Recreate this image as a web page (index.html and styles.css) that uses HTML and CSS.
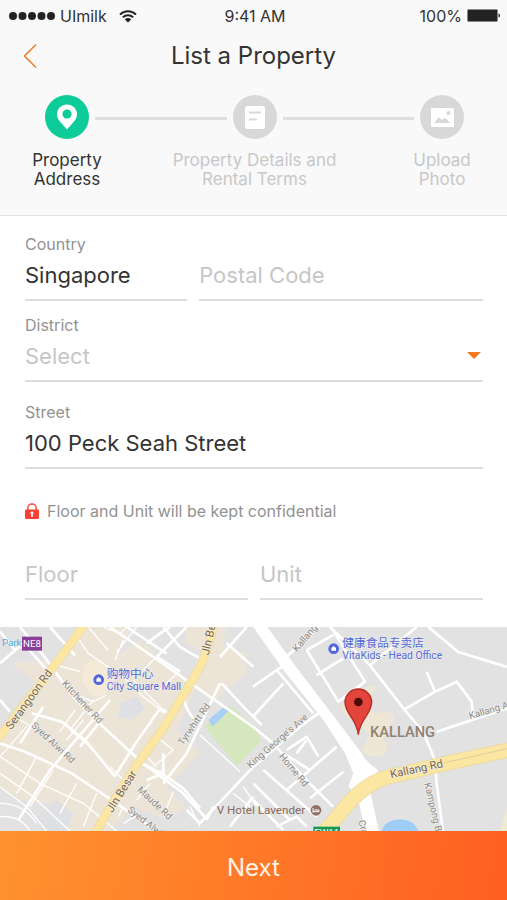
FILE: index.html
```
<!DOCTYPE html>
<html lang="en">
<head>
  <meta charset="utf-8">
  <meta name="viewport" content="width=device-width, initial-scale=1">
  <title>List a Property</title>
  <link rel="stylesheet" href="styles.css">
</head>
<body>
  <header class="header">
    <div class="status-bar">
      <div class="carrier">
        <svg class="signal" viewBox="0 0 46 8" width="46" height="8">
          <circle cx="4" cy="4" r="4"/>
          <circle cx="13.5" cy="4" r="4"/>
          <circle cx="23" cy="4" r="4"/>
          <circle cx="32.5" cy="4" r="4"/>
          <circle cx="42" cy="4" r="4"/>
        </svg>
        <span>UImilk</span>
        <svg class="wifi" viewBox="0 0 18 13" width="18" height="13">
          <path d="M1 4.6a11.5 11.5 0 0 1 16 0M3.8 7.4a7.5 7.5 0 0 1 10.4 0" fill="none" stroke="#222" stroke-width="2"/>
          <path d="M5.8 9.4a4.6 4.6 0 0 1 6.4 0L9 12.6z"/>
        </svg>
      </div>
      <span class="time">9:41 AM</span>
      <div class="battery">
        <span>100%</span>
        <svg viewBox="0 0 34 14" width="34" height="14">
          <rect x="0.5" y="0.5" width="30" height="12" rx="1" fill="#222" stroke="#888"/>
          <path d="M31.5 4.5c2 .3 2 3.7 0 4z"/>
        </svg>
      </div>
    </div>

    <div class="nav">
      <button class="back" type="button" aria-label="Back">
        <svg viewBox="0 0 14 26" width="14" height="26">
          <path d="M13 1.5L1.5 13L13 24.5" fill="none" stroke="#f07d2e" stroke-width="1.6"/>
        </svg>
      </button>
      <h1>List a Property</h1>
    </div>

    <ol class="steps">
      <li class="step active">
        <svg viewBox="0 0 44 44" width="44" height="44">
          <circle cx="22" cy="22" r="22" fill="#0ecb9a"/>
          <path d="M22 9.500c-5.600 0-10 4.300-10 9.700 0 6 5.600 9.800 10 15.300 4.400-5.500 10-9.300 10-15.300 0-5.400-4.400-9.700-10-9.700z" fill="#fff"/>
          <circle cx="22" cy="19" r="4.600" fill="#0ecb9a"/>
        </svg>
        <span>Property<br>Address</span>
      </li>
      <li class="line"></li>
      <li class="step">
        <svg viewBox="0 0 44 44" width="44" height="44">
          <circle cx="22" cy="22" r="22" fill="#d8d8d8"/>
          <rect x="12" y="11" width="20" height="23" rx="2.500" fill="#fff"/>
          <path d="M16 17.500h12M16 24.500h8" stroke="#d8d8d8" stroke-width="2"/>
        </svg>
        <span>Property Details and<br>Rental Terms</span>
      </li>
      <li class="line"></li>
      <li class="step">
        <svg viewBox="0 0 44 44" width="44" height="44">
          <circle cx="22" cy="22" r="22" fill="#d8d8d8"/>
          <rect x="11" y="13" width="23" height="19" rx="1" fill="#fff"/>
          <path d="M14 28l4.500-6 3.500 3 3-2.200 5.500 5.200z" fill="#d8d8d8"/>
          <circle cx="28.500" cy="18" r="2" fill="#d8d8d8"/>
        </svg>
        <span>Upload<br>Photo</span>
      </li>
    </ol>
  </header>

  <form class="form" id="propertyForm">
    <div class="row country-row">
      <div class="field">
        <label for="country">Country</label>
        <input id="country" type="text" value="Singapore">
      </div>
      <div class="field">
        <input id="postal" type="text" placeholder="Postal Code" aria-label="Postal Code">
      </div>
    </div>

    <div class="field">
      <label for="district">District</label>
      <div class="select-wrap">
        <select id="district">
          <option value="">Select</option>
        </select>
        <svg class="arrow" viewBox="0 0 14 7" width="14" height="7"><path d="M0 0h14L7 7z" fill="#f47a20"/></svg>
      </div>
    </div>

    <div class="field street">
      <label for="street">Street</label>
      <input id="street" type="text" value="100 Peck Seah Street">
    </div>

    <p class="notice">
      <svg viewBox="0 0 14 16" width="14" height="16">
        <path d="M2.800 7V5.200a4.200 4.200 0 0 1 8.400 0V7" fill="none" stroke="#fb4a3e" stroke-width="1.500"/>
        <rect y="6.500" width="14" height="9.500" rx="1" fill="#fb3f35"/>
        <path d="M7 8.500a1.500 1.500 0 0 1 .8 2.800V14H6.200v-2.700A1.500 1.500 0 0 1 7 8.500z" fill="#fff"/>
      </svg>
      Floor and Unit will be kept confidential
    </p>

    <div class="row unit-row">
      <div class="field">
        <input id="floor" type="text" placeholder="Floor" aria-label="Floor">
      </div>
      <div class="field">
        <input id="unit" type="text" placeholder="Unit" aria-label="Unit">
      </div>
    </div>
  </form>

  <div class="map">
    <svg viewBox="0 21 1521 612" preserveAspectRatio="xMidYMid slice" role="img" aria-label="Map of Kallang">
      <rect width="1521" height="640" fill="#e2e2e2"/>

      <!-- built up areas -->
      <g fill="#ece4d7">
        <path d="M255 21H400L350 110L420 60L540 160L590 200L530 330L600 400L500 500L560 560L500 600L400 560L330 633H200L150 550L60 540L0 500V330L110 190L30 130L160 120z"/>
        <path d="M560 21H680L670 80L740 100V160L690 200L640 250L570 190L620 100L555 70z"/>
      </g>
      <path d="M360 250l50-20 25 35-40 35-40-10zM110 590l60-50 50 40-20 53H130z" fill="#dfe0e3"/>
      <path d="M250 150q0-25 30-30l30 5 20 30v50q-20 35-50 20l-35-35z" fill="#f4ead7"/>
      <path d="M612 320L690 257L762 315L782 365L712 437z" fill="#d5e8bd"/>
      <path d="M625 300l50-42 12 14-50 48z" fill="#a9cff5"/>
      <path d="M1020 262l80-60q25-15 25 10l-20 25 20 45 40-10 20 20-25 40-10 25 15 25-20 28-45-3-15-15 25-50-40-30-30-20z" fill="#eee7d5"/>
      <path d="M1145 633q10-35 60-35 40 5 50 35z" fill="#9fcdfa"/>
      <path d="M1500 633l21-70v70z" fill="#efead0"/>

      <!-- small streets -->
      <g class="lane">
        <path d="M225 40l40 60 80 55M265 21l60 70M370 60l-25 60M310 21l50 20 20-20M410 21l-60 75"/>
        <path d="M150 130l90 25M180 180l60 50 40 15 40-20M250 300l-50 60M210 330l60 50M280 240l-70 90M225 270l-45 65"/>
        <path d="M80 320l-80 90M0 410l120 80 130 60 100 83M0 460l100 70 110 103M0 500l80 60 60 73M60 300l80 45 60 65"/>
        <path d="M110 410l-60 110M160 450l-70 110M230 490l-50 90M290 520l-40 100M0 590q60-5 90 43M0 550q70 0 110 60"/>
        <path d="M400 180l80 80 10 20M430 150l60-60M540 150l-60 60M410 540l40-50M420 580l-50 30M370 560l-15 30"/>
        <path d="M600 345l120 110M470 350l50 40-60 50M440 410l30 30M370 170l60 60 60 45M330 440l40 40"/>
        <path d="M480 450l15 40M520 515l-20 50M570 560l30 60M700 520l50 40M730 500l40 60"/>
      </g>

      <!-- streets -->
      <g class="street-line">
        <path d="M60 21l70 85 90 125 90 90 120 110 115 85 70 75"/>
        <path d="M150 21l75 85M150 160L70 70 0 130M45 90L0 35"/>
        <path d="M95 280l90 25 70 55 90 110M60 370l70-110M0 370l75 25 140 65 120 80 135 93"/>
        <path d="M330 240L150 450 55 600M300 305l-60 75M345 468l60-95 70-100q10-10 25 5"/>
        <path d="M330 21l130 90 100 70 100 70 100 70M380 21l120 80M440 70l40-30 30-19"/>
        <path d="M560 21l-90 90M470 110l70 45M490 21l50 60 70 40M680 70l80 70M740 21l-80 90M660 190L560 400l-70 90"/>
        <path d="M555 200q-15 60 40 110M425 430l60 30 65 45 50 60M665 190l70 75 50 50M490 400v60l-50 20"/>
        <path d="M600 610L760 440 900 320 955 280M690 620l70-90M560 570l40 40M620 600l20-40M830 620l60-30 30 30"/>
        <path d="M0 240l30 35M760 540l90 90M760 490l110 110M790 450l160 140"/>
        <path d="M759 200L860 130M759 290L850 190M830 150l110 130M759 320l60 50 100 110 80 80M860 390l60-40 35 60M850 400l80 50M920 360l-30 40M1010 380l-150 130M1030 455l-100 80"/>
        <path d="M860 110L955 21M920 90l95 155 80-60-100-160M920 90l80-45M950 165l80-50M990 21l120 115 105 135 55 65 35 85 5 70 20 150M1110 136l140-115"/>
        <path d="M1285 21l90 75 146 45M1280 155l25 60M1210 270l95-55 65-30 45 60 5 50M1310 335l211-70"/>
      </g>

      <!-- main roads -->
      <path d="M752 10H794L895 150L1010 300L1085 400Q1100 430 1135 450L1110 510L1138 640H1098L1070 520L1045 500L1060 460L1035 400L970 300L850 150z" fill="#fff"/>
      <g class="main-edge">
        <path d="M257 10L150 155L-10 360"/>
        <path d="M641 10Q630 80 595 150L490 325 410 435 340 545 280 650"/>
      </g>
      <g class="main-road">
        <path d="M257 10L150 155L-10 360"/>
        <path d="M641 10Q630 80 595 150L490 325 410 435 340 545 280 650"/>
      </g>
      <path d="M1530 389L1340 430 1180 467Q1110 480 1050 545L960 650" fill="none" stroke="#eadba8" stroke-width="46"/>
      <path d="M1530 389L1340 430 1180 467Q1110 480 1050 545L960 650" fill="none" stroke="#fbe6a2" stroke-width="40"/>
      <path d="M1530 384L1340 427 1180 465" fill="none" stroke="#dfcf9c" stroke-width="3"/>

      <!-- road names -->
      <g class="road major">
        <text transform="translate(96 245) rotate(-54)">Serangoon Rd</text>
        <text transform="translate(374 520) rotate(-58)">Jln Besar</text>
        <text transform="translate(642 38) rotate(-77)">Jln Besar</text>
        <text transform="translate(1252 458) rotate(-12)">Kallang Rd</text>
      </g>
      <g class="road">
        <text transform="translate(240 252) rotate(47)">Kitchener Rd</text>
        <text transform="translate(153 375) rotate(43)">Syed Alwi Rd</text>
        <text transform="translate(590 318) rotate(-55)">Tyrwhitt Rd</text>
        <text transform="translate(458 556) rotate(43)">Maude Rd</text>
        <text transform="translate(446 624) rotate(38)">Syed Alwi Rd</text>
        <text transform="translate(838 370) rotate(-41)">King George's Ave</text>
        <text transform="translate(874 456) rotate(50)">Home Rd</text>
        <text transform="translate(922 60) rotate(-50)">Kallang</text>
        <text transform="translate(1482 276) rotate(-17)">Kallang Ave</text>
        <text transform="translate(1296 590) rotate(77)">Kampong Bugis</text>
        <text transform="translate(1092 660) rotate(72)">Crawford</text>
      </g>

      <!-- places -->
      <g class="place">
        <circle cx="296" cy="179" r="16"/>
        <path d="M289 185v-8l7-6 7 6v8z"/>
        <text x="320" y="174" class="cjk">购物中心</text>
        <text x="320" y="210">City Square Mall</text>
        <circle cx="1001" cy="86" r="16"/>
        <path d="M994 92v-8l7-6 7 6v8z"/>
        <text x="1027" y="82" class="cjk">健康食品专卖店</text>
        <text x="1027" y="117">VitaKids - Head Office</text>
      </g>
      <text x="6" y="79" class="station">Park</text>
      <rect x="66" y="50" width="60" height="42" fill="#8b3e98"/>
      <text x="96" y="81" class="badge">NE8</text>
      <text x="650" y="581" class="hotel">V Hotel Lavender</text>
      <circle cx="948" cy="571" r="16" fill="#927062"/>
      <path d="M939 564v14M939 575h18v-5h-14" fill="none" stroke="#fff" stroke-width="3"/>
      <text x="1110" y="351" class="area">KALLANG</text>
      <rect x="940" y="620" width="80" height="30" fill="#159957"/>
      <text x="980" y="649" class="badge">EW11</text>

      <!-- marker -->
      <path d="M1075 344c-5-48-40-62-40-97a40 40 0 0 1 80 0c0 35-35 49-40 97z" fill="#e3443c" stroke="#b52b25" stroke-width="4"/>
      <circle cx="1075" cy="246" r="13" fill="#4d0b08"/>
    </svg>
  </div>

  <button class="next" type="submit" form="propertyForm">Next</button>
</body>
</html>
```
FILE: styles.css
```
* {
  box-sizing: border-box;
}

body {
  margin: 0;
  min-height: 100vh;
  display: flex;
  flex-direction: column;
  background: #fff;
  color: #333;
  font-family: Inter, "Liberation Sans", sans-serif;
}

input,
select,
button {
  font-family: inherit;
}

.header {
  height: 216px;
  background: #f9f9f9;
  border-bottom: 1px solid #e2e2e2;
}

/* Status bar */
.status-bar {
  display: grid;
  grid-template-columns: 1fr auto 1fr;
  align-items: center;
  height: 32px;
  padding: 0 6px 0 9px;
  font-size: 16px;
  fill: #222;
}

.carrier,
.battery {
  display: flex;
  align-items: center;
  gap: 5px;
}

.wifi {
  margin-left: 7px;
}

.battery {
  justify-content: flex-end;
}

/* Title */
.nav {
  position: relative;
  height: 48px;
}

.nav h1 {
  margin: 0;
  font-size: 24px;
  font-weight: 400;
  line-height: 48px;
  text-align: center;
}

.back {
  position: absolute;
  top: 0;
  left: 10px;
  width: 40px;
  height: 48px;
  padding: 0;
  border: 0;
  background: none;
  cursor: pointer;
}

.back svg {
  display: block;
  margin: auto;
}

/* Steps */
.steps {
  display: flex;
  margin: 0;
  padding: 15px 43px 0 45px;
  list-style: none;
}

.step {
  display: flex;
  flex-direction: column;
  align-items: center;
  gap: 12px;
  width: 44px;
  color: #c8c8c8;
  font-size: 17px;
  line-height: 19px;
  text-align: center;
  white-space: nowrap;
}

.step svg {
  flex: none;
}

.step.active {
  color: #333;
}

.line {
  flex: 1;
  height: 3px;
  margin: 22px 6px 0;
  background: #dfdfdf;
}

/* Form */
.form {
  padding: 18px 24px 27px 25px;
}

.row {
  display: grid;
  align-items: end;
  gap: 12px;
}

.country-row {
  grid-template-columns: 4fr 7fr;
  margin-bottom: 14px;
}

.unit-row {
  grid-template-columns: 1fr 1fr;
}

.field {
  min-width: 0;
}

.field label {
  display: block;
  color: #929292;
  font-size: 16px;
  line-height: 20px;
}

.field input,
.field select {
  display: block;
  width: 100%;
  height: 47px;
  padding: 0 0 3px;
  border: 0;
  border-bottom: 2px solid #dedede;
  border-radius: 0;
  outline: none;
  background: none;
  color: #333;
  font-size: 22px;
}

.field input::placeholder {
  color: #c6c6c6;
  opacity: 1;
}

.field select {
  appearance: none;
  color: #c6c6c6;
}

.select-wrap {
  position: relative;
}

.arrow {
  position: absolute;
  top: 17px;
  right: 2px;
  pointer-events: none;
}

.street {
  margin-top: 20px;
}

.notice {
  display: flex;
  align-items: center;
  gap: 8px;
  margin: 32px 0;
  color: #929292;
  font-size: 16px;
  line-height: 20px;
}

/* Map */
.map {
  flex: 1;
  min-height: 204px;
  position: relative;
}

.map svg {
  position: absolute;
  width: 100%;
  height: 100%;
  font-family: Roboto, "Noto Sans CJK SC", sans-serif;
}

.lane,
.street-line,
.main-road,
.main-edge {
  fill: none;
  stroke: #fff;
  stroke-linejoin: round;
}

.lane {
  stroke-width: 4px;
}

.street-line {
  stroke-width: 8px;
}

.main-edge {
  stroke: #ecdcae;
  stroke-width: 27px;
}

.main-road {
  stroke: #fbe6a2;
  stroke-width: 22px;
}

.road text {
  fill: #8a8a8a;
  font-size: 29px;
  text-anchor: middle;
  stroke: #f4f1ea;
  stroke-width: 4px;
  paint-order: stroke;
}

.road.major text {
  fill: #7c6442;
  font-size: 34px;
}

.place {
  fill: #5267d8;
  font-size: 31px;
}

.place text {
  stroke: #f4f1ea;
  stroke-width: 3px;
  paint-order: stroke;
}

.place path {
  fill: #fff;
}

.place .cjk {
  font-size: 35px;
}

.station {
  fill: #4aaee0;
  font-size: 29px;
}

.badge {
  fill: #fff;
  font-size: 29px;
  text-anchor: middle;
}

.hotel {
  fill: #866b5f;
  font-size: 35px;
}

.area {
  fill: #8f8272;
  font-size: 44px;
  font-weight: 500;
}

/* Footer button */
.next {
  height: 69px;
  padding: 4px 0 0;
  border: 0;
  background: linear-gradient(100deg, #ff922e, #ff5f22);
  color: #fff3e6;
  font-size: 24px;
  cursor: pointer;
}
```
